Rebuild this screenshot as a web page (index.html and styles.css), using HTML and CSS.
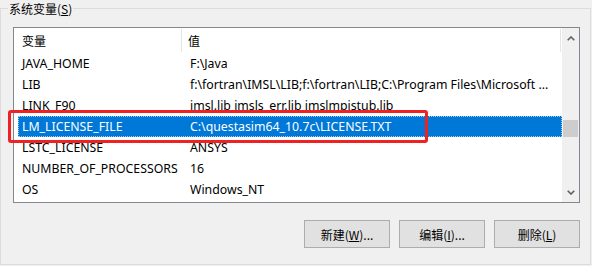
FILE: index.html
```html
<!DOCTYPE html>
<html lang="zh-CN">
<head>
<meta charset="utf-8">
<title>系统变量</title>
<link rel="stylesheet" href="styles.css">
</head>
<body>
<div class="group">
  <div class="legend">系统变量(<u>S</u>)</div>
  <div class="list">
    <div class="main">
      <div class="header">
        <div class="h1">变量</div>
        <div class="h2">值</div>
      </div>
      <div class="row"><div class="c1">JAVA_HOME</div><div class="c2">F:\Java</div></div>
      <div class="row"><div class="c1">LIB</div><div class="c2">f:\fortran\IMSL\LIB;f:\fortran\LIB;C:\Program Files\Microsoft ...</div></div>
      <div class="row"><div class="c1">LINK_F90</div><div class="c2">imsl.lib imsls_err.lib imslmpistub.lib</div></div>
      <div class="row sel"><div class="c1">LM_LICENSE_FILE</div><div class="c2">C:\questasim64_10.7c\LICENSE.TXT</div></div>
      <div class="row"><div class="c1">LSTC_LICENSE</div><div class="c2">ANSYS</div></div>
      <div class="row"><div class="c1">NUMBER_OF_PROCESSORS</div><div class="c2">16</div></div>
      <div class="row"><div class="c1">OS</div><div class="c2">Windows_NT</div></div>
    </div>
    <div class="scrollbar">
      <div class="sb-btn"><svg width="8" height="5" viewBox="0 0 8 5"><polyline points="0.7,4.3 4,1 7.3,4.3" fill="none" stroke="#606060" stroke-width="1.6"/></svg></div>
      <div class="track"><div class="thumb"></div></div>
      <div class="sb-btn"><svg width="8" height="5" viewBox="0 0 8 5"><polyline points="0.7,0.7 4,4 7.3,0.7" fill="none" stroke="#606060" stroke-width="1.6"/></svg></div>
    </div>
  </div>
  <div class="buttons">
    <button class="btn">新建(<u>W</u>)...</button>
    <button class="btn">编辑(<u>I</u>)...</button>
    <button class="btn">删除(<u>L</u>)</button>
  </div>
</div>
<div class="highlight"></div>
</body>
</html>
```
FILE: styles.css
```css
html, body {
  margin: 0;
  padding: 0;
  background: #f0f0f0;
}
body {
  font-family: "Noto Sans", "Noto Sans CJK SC", sans-serif;
  font-size: 12px;
  color: #000;
  width: 592px;
  height: 266px;
  overflow: hidden;
}
.group {
  position: relative;
  margin-top: 8px;
  width: 591px;
  height: 257px;
  box-sizing: border-box;
  border: 1px solid #dcdcdc;
  padding: 18px 10px 0 12px;
}
.legend {
  position: absolute;
  left: 7px;
  top: -9px;
  padding: 0 1px;
  background: #f0f0f0;
  line-height: 17px;
  font-family: "Noto Sans CJK SC", "Noto Sans", sans-serif;
}
.legend u, .btn u {
  text-underline-offset: 1px;
}
.list {
  display: flex;
  height: 176px;
  box-sizing: border-box;
  border: 1px solid #828790;
  background: #fff;
}
.main {
  flex: 1;
  padding-left: 4px;
  min-width: 0;
}
.header {
  display: flex;
  height: 25px;
}
.h1, .h2 {
  display: flex;
  align-items: center;
  margin: 1px 0;
  font-family: "Noto Sans CJK SC", "Noto Sans", sans-serif;
}
.h1 {
  width: 164px;
  padding-left: 4px;
  box-sizing: border-box;
  border-right: 1px solid #e5e5e5;
}
.h2 {
  flex: 1;
  padding-left: 6px;
  border-right: 1px solid #e5e5e5;
  margin-right: 1px;
}
.row {
  display: flex;
  align-items: center;
  height: 21px;
  white-space: nowrap;
  font-size: 12.3px;
}
.c1 {
  width: 165px;
  padding-left: 4px;
  box-sizing: border-box;
}
.c2 {
  padding-left: 7px;
}
.row.sel {
  background: #0078d7;
  color: #fff;
  outline: 1px dotted #9cc9f0;
  outline-offset: -1px;
}
.scrollbar {
  width: 17px;
  background: #f0f0f0;
  display: flex;
  flex-direction: column;
}
.sb-btn {
  height: 20px;
  display: flex;
  align-items: center;
  justify-content: center;
}
.track {
  flex: 1;
}
.thumb {
  margin: 72px 1px 0;
  height: 17px;
  background: #cdcdcd;
}
.buttons {
  display: flex;
  justify-content: flex-end;
  gap: 9px;
  margin-top: 17px;
}
.btn {
  width: 86px;
  height: 28px;
  background: #e1e1e1;
  border: 1px solid #adadad;
  font-family: "Noto Sans CJK SC", "Noto Sans", sans-serif;
  font-size: 12px;
  color: #000;
  padding: 0;
}
.highlight {
  position: absolute;
  left: 8px;
  top: 110px;
  width: 420px;
  height: 33px;
  box-sizing: border-box;
  border: 3px solid #ee2222;
  border-radius: 3px;
}
```
